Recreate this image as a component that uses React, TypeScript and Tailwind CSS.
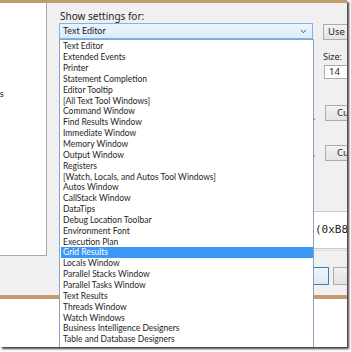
import { ChevronDown } from "lucide-react"

const items = [
  "Text Editor",
  "Extended Events",
  "Printer",
  "Statement Completion",
  "Editor Tooltip",
  "[All Text Tool Windows]",
  "Command Window",
  "Find Results Window",
  "Immediate Window",
  "Memory Window",
  "Output Window",
  "Registers",
  "[Watch, Locals, and Autos Tool Windows]",
  "Autos Window",
  "CallStack Window",
  "DataTips",
  "Debug Location Toolbar",
  "Environment Font",
  "Execution Plan",
  "Grid Results",
  "Locals Window",
  "Parallel Stacks Window",
  "Parallel Tasks Window",
  "Text Results",
  "Threads Window",
  "Watch Windows",
  "Business Intelligence Designers",
  "Table and Database Designers",
]

const selected = "Grid Results"

const uiFont = { fontFamily: '"Noto Sans", "Liberation Sans", sans-serif' }
const listFont = { fontFamily: 'Lato, "Noto Sans", sans-serif' }

function Chevron() {
  return (
    <svg width="7" height="5" viewBox="0 0 7 5" className="shrink-0">
      <path d="M0.5 0.8 L3.5 3.8 L6.5 0.8" fill="none" stroke="#404040" strokeWidth="1.2" />
    </svg>
  )
}

export default function App() {
  return (
    <div className="w-[351px] h-[352px] bg-white overflow-hidden text-[#1e1e1e]" style={uiFont}>
      <div className="relative w-[347px] h-[347px] flex flex-col bg-white shadow-[2px_2px_2px_rgba(0,0,0,0.75)] overflow-hidden">
        {/* top window edge */}
        <div className="h-[3px] shrink-0 bg-[#c29a70]" />

        {/* dialog body */}
        <div className="h-[292px] shrink-0 flex bg-[#f0f0f0]">
          {/* left tree */}
          <div className="w-[47px] shrink-0 h-[253px] bg-white border-r border-b border-[#a9a9a9] overflow-hidden">
            <div className="mt-[85px] -ml-[28px] text-[9px] leading-[12px] whitespace-nowrap" style={listFont}>
              Settings
            </div>
          </div>

          {/* middle column */}
          <div className="w-[264px] shrink-0 ml-[12px] flex flex-col">
            <div className="mt-[7px] ml-[1px] text-[10px] leading-[12px]">Show settings for:</div>
            <div className="mt-[1px] w-[254px] h-[16px] border border-[#7eb4ea] bg-gradient-to-b from-[#ecf4fc] to-[#dcecfc] flex items-center pl-[3px] pr-[4px]">
              <span className="flex-1 text-[9px] leading-[12px]" style={listFont}>
                Text Editor
              </span>
              <ChevronDown className="w-[9px] h-[9px] text-[#404040]" strokeWidth={2.5} />
            </div>
            <div className="mt-[73px] h-[16px] flex items-center justify-end pr-[8px]">
              <Chevron />
            </div>
            <div className="mt-[21px] h-[16px] flex items-center justify-end pr-[8px]">
              <Chevron />
            </div>
          </div>

          {/* right column */}
          <div className="w-[24px] shrink-0 flex flex-col">
            <div className="mt-[21px] h-[16px] w-[70px] shrink-0 border border-[#acacac] bg-gradient-to-b from-[#f2f2f2] to-[#e3e3e3] text-[9.5px] leading-[14px] pl-[4px] whitespace-nowrap">
              Use Defaults
            </div>
            <div className="mt-[11px] text-[9px] leading-[12px]">Size:</div>
            <div className="mt-[2px] ml-[1px] h-[14px] w-[40px] shrink-0 border border-[#abadb3] bg-white text-[9.5px] leading-[12px] pl-[4px]">
              14
            </div>
          </div>
        </div>

        {/* window edge between dialogs */}
        <div className="h-[4px] shrink-0 bg-[#c49a6e]" />
        <div className="flex-1 bg-white" />

        {/* controls partly hidden behind the open list */}
        <div className="absolute left-[325px] top-[105px] h-[16px] w-[60px] border border-[#acacac] bg-gradient-to-b from-[#f2f2f2] to-[#e3e3e3] text-[9.5px] leading-[14px] pl-[11px] whitespace-nowrap">
          Custom...
        </div>
        <div className="absolute left-[325px] top-[145px] h-[16px] w-[60px] border border-[#acacac] bg-gradient-to-b from-[#f2f2f2] to-[#e3e3e3] text-[9.5px] leading-[14px] pl-[11px] whitespace-nowrap">
          Custom...
        </div>
        <div className="absolute left-[314px] top-[211px] w-[40px] h-[38px] bg-white border-y border-[#c8c8c8] flex items-center pl-[1px] text-[11px] whitespace-nowrap" style={{ fontFamily: '"DejaVu Sans Mono", "Liberation Mono", monospace' }}>
          (0xB8
        </div>
        <div className="absolute left-[314px] top-[250px] w-[40px] h-[1px] bg-[#dcdcdc]" />
        <div className="absolute left-[300px] top-[267px] flex gap-[4px]">
          <div className="w-[29px] h-[18px] border border-[#3c7fb1] bg-gradient-to-b from-[#eef5fb] to-[#dde9f3]" />
          <div className="w-[59px] h-[18px] border border-[#acacac] bg-gradient-to-b from-[#f2f2f2] to-[#e3e3e3]" />
        </div>

        {/* open dropdown list */}
        <div className="absolute left-[59px] top-[39px] w-[255px] h-[309px] bg-white border border-[#8aa2c4] pt-[1px] pl-[1px]" style={listFont}>
          {items.map((item) => (
            <div
              key={item}
              className={`h-[10.85px] flex items-center pl-[2px] text-[8.5px] leading-[10px] whitespace-nowrap ${
                item === selected ? "bg-[#3b97f6] text-white" : "text-[#1e1e1e]"
              }`}
            >
              {item}
            </div>
          ))}
        </div>
      </div>
    </div>
  )
}
